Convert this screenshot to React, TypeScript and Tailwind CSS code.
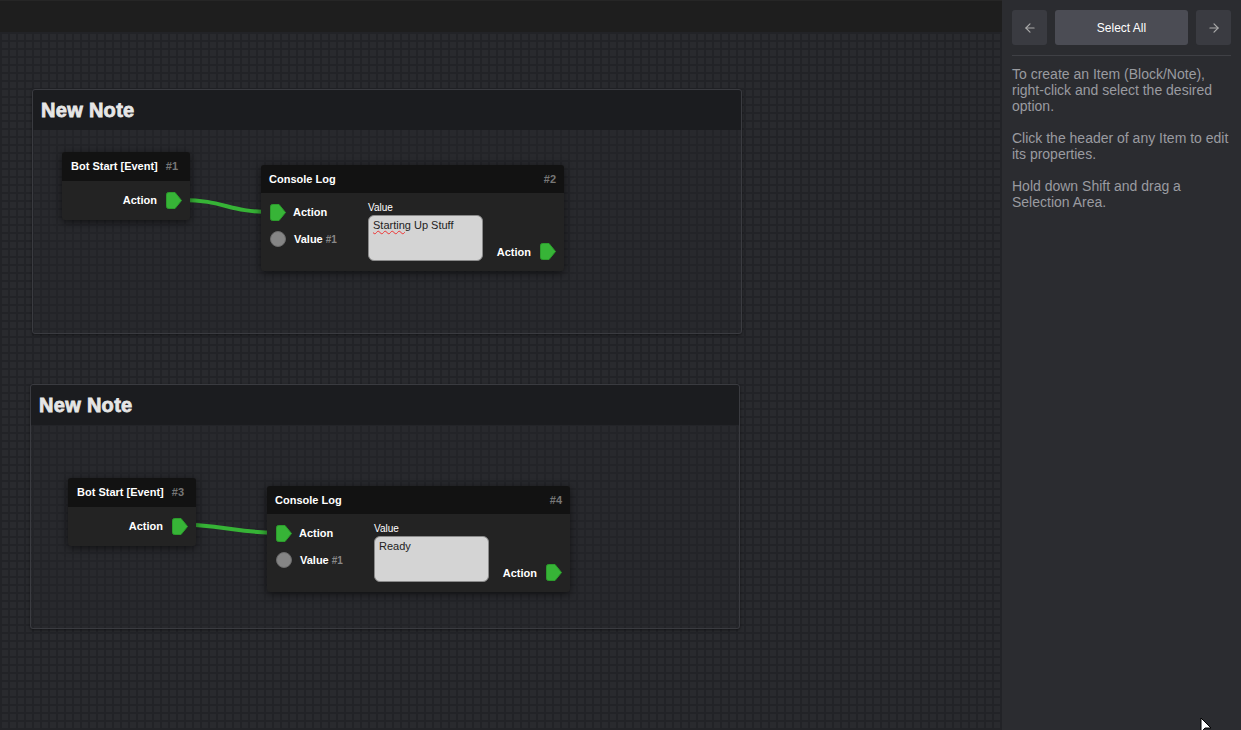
import { ArrowLeft, ArrowRight } from "lucide-react"

function Pin() {
  return (
    <svg width="16" height="17" viewBox="0 0 16 17" className="shrink-0">
      <path d="M2.5 0.5 H9 L15.5 8.5 L9 16.5 H2.5 Q0.5 16.5 0.5 14.5 V2.5 Q0.5 0.5 2.5 0.5 Z" fill="#37b437" stroke="#2c9c2c" strokeWidth="1" strokeLinejoin="round" />
    </svg>
  )
}

function ValueDot() {
  return <div className="w-[16px] h-[16px] rounded-full bg-[#858585] border border-[#6b6b6b] shrink-0" />
}

function EventBlock({ id, className }: { id: number; className: string }) {
  return (
    <div className={"absolute w-[128px] rounded-[3px] bg-[#232323] shadow-[0_2px_8px_rgba(0,0,0,0.6)] " + className}>
      <div className="h-[29px] bg-[#121212] rounded-t-[3px] flex items-center pl-[9px] gap-[8px] text-[11px] font-bold whitespace-nowrap">
        <span className="text-white">Bot Start [Event]</span>
        <span className="text-[#777]">#{id}</span>
      </div>
      <div className="h-[39px] flex items-center justify-end pr-[8px] gap-[9px]">
        <span className="text-[11px] font-bold text-white">Action</span>
        <Pin />
      </div>
    </div>
  )
}

function LogBlock({ id, text, spell, className }: { id: number; text: string; spell?: boolean; className: string }) {
  return (
    <div className={"absolute w-[303px] rounded-[3px] bg-[#232323] shadow-[0_2px_8px_rgba(0,0,0,0.6)] " + className}>
      <div className="h-[28px] bg-[#121212] rounded-t-[3px] flex items-center justify-between px-[8px] text-[11px] font-bold">
        <span className="text-white">Console Log</span>
        <span className="text-[#777]">#{id}</span>
      </div>
      <div className="flex pl-[9px] pr-[8px] pt-[11px] pb-[10px]">
        <div className="w-[98px] flex flex-col gap-[10px]">
          <div className="flex items-center gap-[7px] h-[17px]">
            <Pin />
            <span className="text-[11px] font-bold text-white">Action</span>
          </div>
          <div className="flex items-center gap-[8px] h-[16px]">
            <ValueDot />
            <span className="text-[11px] font-bold text-white">
              Value <span className="text-[10px] text-[#888]">#1</span>
            </span>
          </div>
        </div>
        <div className="flex flex-col -mt-[2px]">
          <span className="text-[10px] leading-[12px] text-white">Value</span>
          <div className="mt-[1px] w-[115px] h-[46px] rounded-[6px] bg-[#d4d4d4] border border-[#8a8a8a] px-[4px] py-[1px] text-[11px] text-[#222]">
            {spell ? (
              <>
                <span className="underline decoration-wavy decoration-[#e33] decoration-1">Starting</span>
                {" Up Stuff"}
              </>
            ) : (
              text
            )}
          </div>
        </div>
        <div className="flex-1 flex items-end justify-end gap-[9px] pb-[1px]">
          <span className="text-[11px] font-bold text-white">Action</span>
          <Pin />
        </div>
      </div>
    </div>
  )
}

function Note({ className }: { className: string }) {
  return (
    <div className={"absolute w-[710px] h-[245px] rounded-[3px] border border-[#3a3b40] bg-[rgba(40,41,45,0.25)] shadow-[0_1px_3px_rgba(0,0,0,0.5)] " + className}>
      <div className="h-[40px] bg-[#1b1c1f] flex items-center px-[8px] rounded-t-[3px]">
        <span className="text-[20px] font-bold text-[#e6e6e6] [-webkit-text-stroke:0.8px_#e6e6e6] tracking-[0.3px]">New Note</span>
      </div>
    </div>
  )
}

export default function App() {
  return (
    <div className="w-[1241px] h-[730px] flex overflow-hidden font-['Liberation_Sans',Arial,sans-serif] relative">
      <div className="w-[1002px] flex flex-col">
        <div className="h-[32px] bg-[#1e1e1e] border-t border-[#262626]" />
        <div className="flex-1 relative bg-[#292a2e] bg-[linear-gradient(to_right,#222327_2px,transparent_2px),linear-gradient(to_bottom,#222327_2px,transparent_2px)] bg-[size:8px_8px]">
          <Note className="left-[32px] top-[57px]" />
          <Note className="left-[30px] top-[352px]" />
          <svg className="absolute inset-0 pointer-events-none" width="1002" height="698">
            <path d="M182 168 C 224 168, 228 180, 271 180" stroke="#36b336" strokeWidth="4" fill="none" />
            <path d="M196 493 C 236 496, 238 500, 277 501" stroke="#36b336" strokeWidth="4" fill="none" />
          </svg>
          <EventBlock id={1} className="left-[62px] top-[120px]" />
          <LogBlock id={2} text="Starting Up Stuff" spell className="left-[261px] top-[133px]" />
          <EventBlock id={3} className="left-[68px] top-[446px]" />
          <LogBlock id={4} text="Ready" className="left-[267px] top-[454px]" />
        </div>
      </div>
      <div className="flex-1 bg-[#2b2c30] px-[10px] pt-[10px]">
        <div className="flex gap-[8px] h-[35px]">
          <button className="w-[35px] rounded-[3px] bg-[#3a3b41] flex items-center justify-center text-[#aaa]">
            <ArrowLeft size={14} />
          </button>
          <button className="flex-1 rounded-[3px] bg-[#4b4c54] text-white text-[12px]">Select All</button>
          <button className="w-[35px] rounded-[3px] bg-[#3a3b41] flex items-center justify-center text-[#aaa]">
            <ArrowRight size={14} />
          </button>
        </div>
        <div className="mt-[10px] border-t border-[#3f4045]" />
        <div className="mt-[10px] text-[14px] leading-[16px] text-[#9a9ba0] flex flex-col gap-[16px]">
          <p>To create an Item (Block/Note), right-click and select the desired option.</p>
          <p>Click the header of any Item to edit its properties.</p>
          <p>Hold down Shift and drag a Selection Area.</p>
        </div>
      </div>
      <svg className="absolute left-[1200px] top-[718px]" width="14" height="14" viewBox="0 0 14 14">
        <path d="M1 0 L1 14 L5 10 L11 10 Z" fill="#fff" stroke="#000" strokeWidth="1" />
      </svg>
    </div>
  )
}
